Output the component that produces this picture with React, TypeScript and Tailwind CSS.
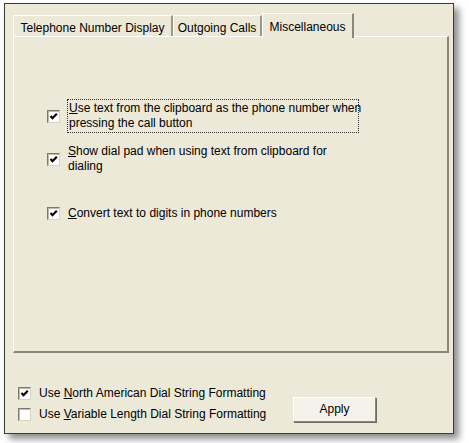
import React from "react";

const font = { fontFamily: '"Liberation Sans", Arial, sans-serif' };

interface ICheckProps {
    checked: boolean
}

const CheckBox: React.FC<ICheckProps> = ({ checked }) => {
    return (
        <div className="w-[13px] h-[13px] shrink-0 bg-white border border-t-[#7d7a6b] border-l-[#7d7a6b] border-b-[#d6d3c4] border-r-[#d6d3c4] shadow-[inset_1px_1px_0_#bdbaab] flex items-center justify-center">
            {checked ? (
                <svg width="9" height="9" viewBox="0 0 9 9">
                    <polyline points="1.5,4 3.5,6.2 7.8,1.8" fill="none" stroke="#000" strokeWidth="2.2" />
                </svg>
            ) : null}
        </div>
    );
};

const Tab: React.FC<{ label: string; width: string; selected?: boolean }> = ({ label, width, selected }) => {
    if (selected) {
        return (
            <div className={`${width} h-[25px] -mb-[2px] relative z-10 bg-[#ece9d8] border-t border-l border-white border-r-2 border-r-[#8a8778] flex items-start justify-center pt-[4px] text-[12px] text-black`}>
                {label}
            </div>
        );
    }
    return (
        <div className={`${width} h-[21px] border-t border-l border-white border-r-2 border-r-[#9b988a] flex items-start justify-center pt-[3px] text-[12px] text-black`}>
            {label}
        </div>
    );
};

const App: React.FC = () => {
    return (
        <div className="w-[469px] h-[443px] bg-white pt-[3px] pl-[4px]" style={font}>
            <div className="w-[450px] h-[431px] bg-[#ece9d8] border border-[#3b3b38] shadow-[5px_5px_7px_rgba(0,0,0,0.45)] pl-[8px] pt-[9px] flex flex-col">
                {/* tab strip */}
                <div className="flex items-end h-[23px]">
                    <Tab label="Telephone Number Display" width="w-[160px]" />
                    <Tab label="Outgoing Calls" width="w-[89px]" />
                    <Tab label="Miscellaneous" width="w-[92px]" selected />
                </div>

                {/* page body */}
                <div className="w-[436px] h-[317px] border-t border-l border-white border-r-2 border-b-2 border-r-[#8a8778] border-b-[#8a8778] pl-[33px] pt-[62px] flex flex-col text-[12px] leading-[15px] text-black whitespace-nowrap">
                    <div className="flex items-center gap-[7px]">
                        <CheckBox checked />
                        <div className="border border-dotted border-[#333] px-[1px] py-[1px] w-[292px]">
                            <div><span className="underline">U</span>se text from the clipboard as the phone number when</div>
                            <div>pressing the call button</div>
                        </div>
                    </div>

                    <div className="flex items-center gap-[8px] mt-[11px]">
                        <CheckBox checked />
                        <div>
                            <div><span className="underline">S</span>how dial pad when using text from clipboard for</div>
                            <div>dialing</div>
                        </div>
                    </div>

                    <div className="flex items-center gap-[8px] mt-[32px]">
                        <CheckBox checked />
                        <div><span className="underline">C</span>onvert text to digits in phone numbers</div>
                    </div>
                </div>

                {/* global options */}
                <div className="flex items-start mt-[33px] text-[12px] leading-[15px] text-black whitespace-nowrap">
                    <div className="flex flex-col gap-[6px] pl-[5px]">
                        <div className="flex items-center gap-[8px]">
                            <CheckBox checked />
                            <span>Use <span className="underline">N</span>orth American Dial String Formatting</span>
                        </div>
                        <div className="flex items-center gap-[8px]">
                            <CheckBox checked={false} />
                            <span>Use <span className="underline">V</span>ariable Length Dial String Formatting</span>
                        </div>
                    </div>
                    <button className="ml-auto mr-[77px] mt-[11px] w-[83px] h-[25px] bg-[#f4f2ea] border border-t-white border-l-white border-r-[#8a8778] border-b-[#8a8778] shadow-[1px_1px_0_#6f6d62] text-[12px]">
                        Apply
                    </button>
                </div>
            </div>
        </div>
    );
};

export default App;
